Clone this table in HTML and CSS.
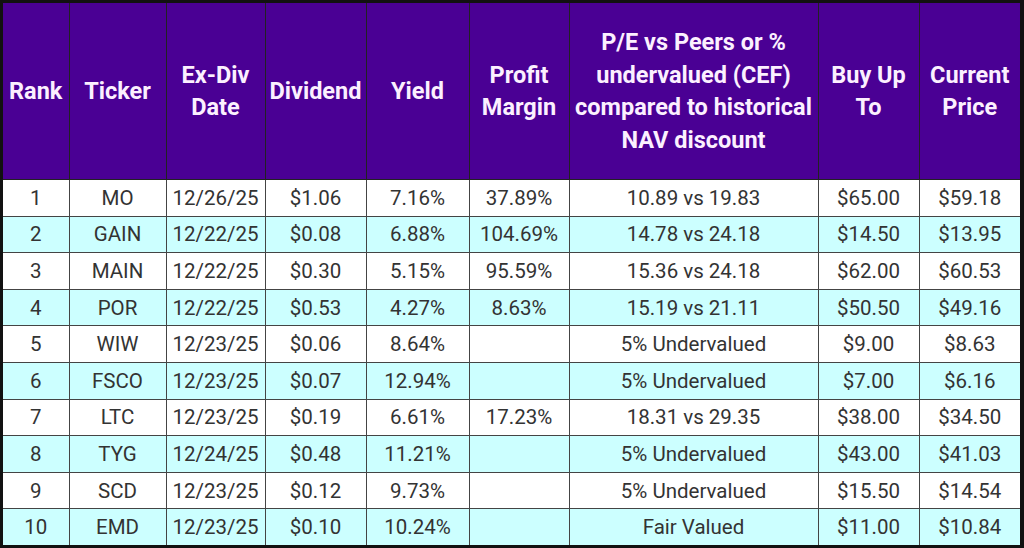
FILE: index.html
```html
<!DOCTYPE html>
<html>
<head>
<meta charset="utf-8">
<link rel="stylesheet" href="styles.css">
</head>
<body>
<div class="frame">
<table class="picks">
<colgroup>
<col class="c-rank"><col class="c-ticker"><col class="c-date"><col class="c-div"><col class="c-yield"><col class="c-margin"><col class="c-pe"><col class="c-buy"><col class="c-price">
</colgroup>
<thead>
<tr>
<th>Rank</th>
<th>Ticker</th>
<th>Ex-Div<br>Date</th>
<th>Dividend</th>
<th>Yield</th>
<th>Profit<br>Margin</th>
<th>P/E vs Peers or %<br>undervalued (CEF)<br>compared to historical<br>NAV discount</th>
<th>Buy Up<br>To</th>
<th>Current<br>Price</th>
</tr>
</thead>
<tbody>
<tr><td>1</td><td>MO</td><td>12/26/25</td><td>$1.06</td><td>7.16%</td><td>37.89%</td><td>10.89 vs 19.83</td><td>$65.00</td><td>$59.18</td></tr>
<tr class="alt"><td>2</td><td>GAIN</td><td>12/22/25</td><td>$0.08</td><td>6.88%</td><td>104.69%</td><td>14.78 vs 24.18</td><td>$14.50</td><td>$13.95</td></tr>
<tr><td>3</td><td>MAIN</td><td>12/22/25</td><td>$0.30</td><td>5.15%</td><td>95.59%</td><td>15.36 vs 24.18</td><td>$62.00</td><td>$60.53</td></tr>
<tr class="alt"><td>4</td><td>POR</td><td>12/22/25</td><td>$0.53</td><td>4.27%</td><td>8.63%</td><td>15.19 vs 21.11</td><td>$50.50</td><td>$49.16</td></tr>
<tr><td>5</td><td>WIW</td><td>12/23/25</td><td>$0.06</td><td>8.64%</td><td></td><td>5% Undervalued</td><td>$9.00</td><td>$8.63</td></tr>
<tr class="alt"><td>6</td><td>FSCO</td><td>12/23/25</td><td>$0.07</td><td>12.94%</td><td></td><td>5% Undervalued</td><td>$7.00</td><td>$6.16</td></tr>
<tr><td>7</td><td>LTC</td><td>12/23/25</td><td>$0.19</td><td>6.61%</td><td>17.23%</td><td>18.31 vs 29.35</td><td>$38.00</td><td>$34.50</td></tr>
<tr class="alt"><td>8</td><td>TYG</td><td>12/24/25</td><td>$0.48</td><td>11.21%</td><td></td><td>5% Undervalued</td><td>$43.00</td><td>$41.03</td></tr>
<tr><td>9</td><td>SCD</td><td>12/23/25</td><td>$0.12</td><td>9.73%</td><td></td><td>5% Undervalued</td><td>$15.50</td><td>$14.54</td></tr>
<tr class="alt"><td>10</td><td>EMD</td><td>12/23/25</td><td>$0.10</td><td>10.24%</td><td></td><td>Fair Valued</td><td>$11.00</td><td>$10.84</td></tr>
</tbody>
</table>
</div>
</body>
</html>
```

FILE: styles.css
```css
html, body {
  margin: 0;
  padding: 0;
  background: #ffffff;
}
.frame {
  width: 1024px;
  height: 548px;
  box-sizing: border-box;
  border-style: solid;
  border-color: #111111;
  border-width: 3px 4px 3px 3px;
  background: #ffffff;
  overflow: hidden;
}
.picks {
  border-collapse: collapse;
  table-layout: fixed;
  width: 1017px;
  font-family: Roboto, "Liberation Sans", sans-serif;
}
.c-rank { width: 66px; }
.c-ticker { width: 97px; }
.c-date { width: 99px; }
.c-div { width: 101px; }
.c-yield { width: 103px; }
.c-margin { width: 100px; }
.c-pe { width: 249px; }
.c-buy { width: 101px; }
.c-price { width: 101px; }
.picks th {
  background: #4a0094;
  color: #fcf0ff;
  font-weight: 700;
  font-size: 23.5px;
  line-height: 32.5px;
  height: 176px;
  padding: 0;
  text-align: center;
  vertical-align: middle;
  border: 1px solid #222222;
  border-top: none;
  white-space: nowrap;
}
.picks th:first-child { border-left: none; }
.picks th:last-child { border-right: none; }
.picks td {
  height: 35.6px;
  padding: 0;
  font-size: 20.5px;
  color: #333333;
  text-align: center;
  vertical-align: middle;
  border: 1px solid #444444;
  white-space: nowrap;
}
.picks td:first-child { border-left: none; }
.picks td:last-child { border-right: none; }
.picks tbody tr:last-child td { border-bottom: none; }
.picks tr.alt td { background: #ccffff; }
```
